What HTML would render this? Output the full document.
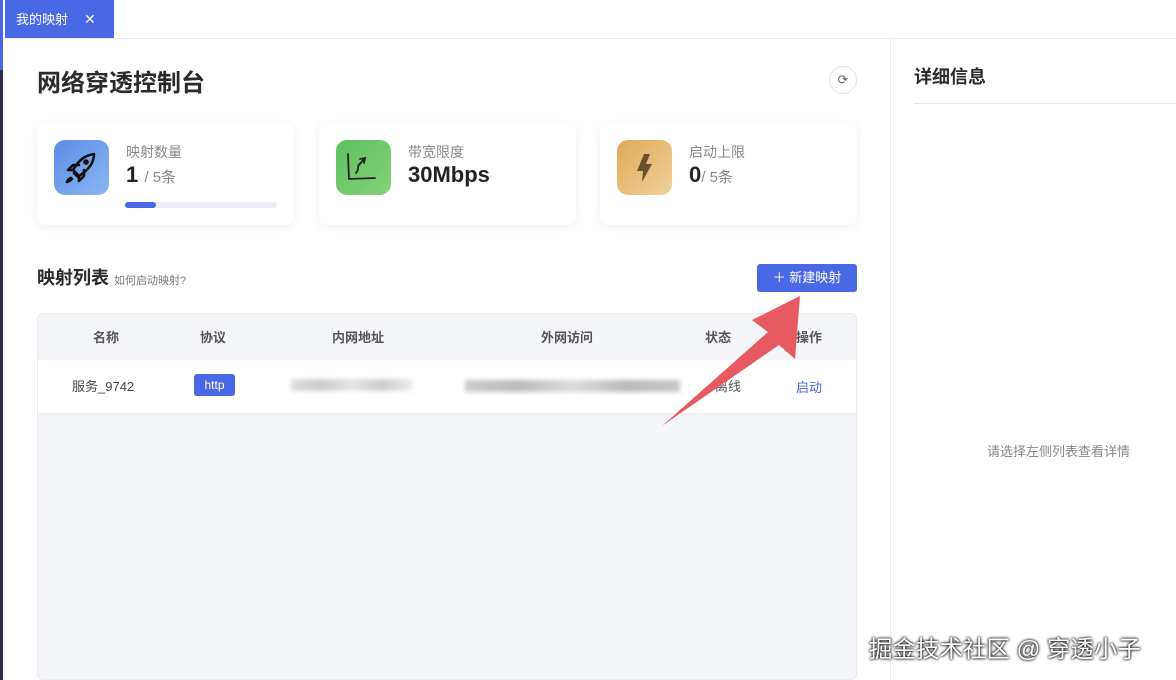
<!DOCTYPE html>
<html><head><meta charset="utf-8"><style>
*{margin:0;padding:0;box-sizing:border-box}
body{width:1176px;height:680px;overflow:hidden;background:#fff;font-family:"Liberation Sans","Noto Sans CJK SC",sans-serif;position:relative;color:#333}
.abs{position:absolute}
.card{position:absolute;top:123px;width:257px;height:102px;background:#fff;border-radius:8px;box-shadow:0 2px 10px rgba(0,0,0,0.06)}
.ic{position:absolute;left:17px;top:17px;width:55px;height:55px;border-radius:11px}
.lbl{position:absolute;left:89px;top:19px;font-size:14px;color:#888}
.val{position:absolute;left:89px;top:39px;font-size:22px;font-weight:bold;color:#222}
.val small{font-size:15px;font-weight:normal;color:#888}
</style></head><body>
<div class="abs" style="left:0;top:0;width:3px;height:680px;background:#2a2d45"></div>
<div class="abs" style="left:0;top:0;width:3px;height:70px;background:#4a67e6"></div>
<div class="abs" style="left:5px;top:0;width:109px;height:38px;background:#4a67e6;color:#fff;font-size:13px;line-height:38px;padding-left:11px">我的映射<span style="margin-left:16px;font-size:14px">✕</span></div>
<div class="abs" style="left:3px;top:38px;width:1173px;height:1px;background:#eceef2"></div>
<div class="abs" style="left:890px;top:39px;width:1px;height:641px;background:#e6e8ec"></div>
<div class="abs" style="left:37px;top:63px;font-size:24px;font-weight:bold;color:#2b2b2b">网络穿透控制台</div>
<div class="abs" style="left:829px;top:66px;width:28px;height:28px;border:1px solid #e2e4e8;border-radius:50%;text-align:center;line-height:26px;font-size:13px;color:#666">⟳</div>

<div class="card" style="left:37px">
<div class="ic" style="background:linear-gradient(135deg,#5b8de6,#8ab6f0)"><svg width="55" height="55" viewBox="0 0 55 55" fill="none" stroke="#111" stroke-width="2.6" stroke-linecap="round" stroke-linejoin="round"><path d="M20 33 L24 37 M19 30 C26 18 33 15 40 14 C40 22 36 29 25 36 Z M19 30 L14 30 L19 25 L25 25 M25 36 L25 41 L30 36 L30 30 M17 38 C14 39 13 42 13 42 C13 42 16 41 18 39"/><circle cx="32" cy="22" r="1.5" fill="#111"/></svg></div>
<div class="lbl">映射数量</div>
<div class="val">1 <small>/ 5条</small></div>
<div class="abs" style="left:88px;top:79px;width:152px;height:6px;border-radius:3px;background:#eceef3"><div style="width:31px;height:6px;border-radius:3px;background:#4a67e6"></div></div>
</div>
<div class="card" style="left:319px">
<div class="ic" style="background:linear-gradient(135deg,#5cbf5c,#86d37a)"><svg width="55" height="55" viewBox="0 0 55 55" fill="none" stroke="#222" stroke-width="1.8" stroke-linecap="round"><path d="M12 14 L13 39 L39 38 M20 33 C24 29 20 25 25 23 M24 19 L29 18 L28 23 M29 18 L23 25"/></svg></div>
<div class="lbl">带宽限度</div>
<div class="val">30Mbps</div>
</div>
<div class="card" style="left:600px">
<div class="ic" style="background:linear-gradient(135deg,#e0a859,#f0d29c)"><svg width="55" height="55" viewBox="0 0 55 55"><path d="M27 14 L33 14 L29 24 L35 24 L25 42 L26 31 L20 31 Z" fill="#6b5030"/></svg></div>
<div class="lbl">启动上限</div>
<div class="val">0<small>/ 5条</small></div>
</div>

<div class="abs" style="left:37px;top:264px;font-size:18px;font-weight:bold;color:#2b2b2b">映射列表 <span style="font-size:11px;font-weight:normal;color:#777">如何启动映射?</span></div>
<div class="abs" style="left:757px;top:264px;width:100px;height:28px;background:#4a67e6;border-radius:3px;color:#fff;font-size:13px;line-height:28px;text-align:center">＋ 新建映射</div>

<div class="abs" style="left:37px;top:313px;width:820px;height:367px;background:#f4f5f8;border:1px solid #e8eaee;border-radius:6px;overflow:hidden">
<div style="height:46px;font-size:13px;color:#555;font-weight:bold;position:relative">
<span class="abs" style="left:55px;top:13px">名称</span><span class="abs" style="left:162px;top:13px">协议</span><span class="abs" style="left:294px;top:13px">内网地址</span><span class="abs" style="left:503px;top:13px">外网访问</span><span class="abs" style="left:667px;top:13px">状态</span><span class="abs" style="left:758px;top:13px">操作</span></div>
<div style="height:54px;background:#fff;position:relative;border-bottom:1px solid #eceef2">
<span class="abs" style="left:34px;top:16px;font-size:13px;color:#444">服务_9742</span>
<span class="abs" style="left:156px;top:14px;width:41px;height:22px;background:#4a67e6;border-radius:3px;color:#fff;font-size:12px;text-align:center;line-height:22px">http</span>
<div class="abs" style="left:253px;top:19px;width:122px;height:12px;background:linear-gradient(90deg,#ddd,#ccc,#e5e5e5,#ccc,#eee);filter:blur(2px)"></div>
<div class="abs" style="left:427px;top:20px;width:215px;height:12px;background:linear-gradient(90deg,#ccc,#bbb,#ddd,#bbb,#c8c8c8);filter:blur(2px)"></div>
<span class="abs" style="left:677px;top:16px;font-size:13px;color:#555">离线</span>
<span class="abs" style="left:758px;top:17px;font-size:13px;color:#4a67e6">启动</span>
</div>
</div>

<svg class="abs" style="left:650px;top:285px" width="220" height="150"><polygon points="150,11 145,74 129,60 12,141 118,47 102,35" fill="#e85a62"/></svg>

<div class="abs" style="left:914px;top:63px;font-size:18px;font-weight:bold;color:#2b2b2b">详细信息</div>
<div class="abs" style="left:914px;top:103px;width:262px;height:1px;background:#e6e8ec"></div>
<div class="abs" style="left:987px;top:441px;font-size:13px;color:#888">请选择左侧列表查看详情</div>
<div class="abs" style="left:869px;top:630px;font-size:23.5px;color:#fff;text-shadow:0 0 2px #000,0 0 3px #000;white-space:nowrap">掘金技术社区 @ 穿透小子</div>
</body></html>
